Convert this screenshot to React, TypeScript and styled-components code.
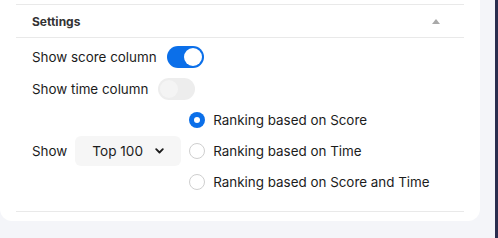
import React, { useState } from "react";
import styled, { createGlobalStyle } from "styled-components";

const Global = createGlobalStyle`
  html, body { margin: 0; padding: 0; background: #f4f5f9; }
  body { font-family: Inter, "Noto Sans", sans-serif; color: #1c1c1c; }
  * { box-sizing: border-box; }
`;

const Page = styled.div`
  display: flex;
  width: 498px;
  height: 238px;
  overflow: hidden;
`;

const Card = styled.div`
  width: 480px;
  height: 221px;
  background: #fff;
  border-radius: 0 0 12px 12px;
  padding: 4px 16px 0;
`;

const Spacer = styled.div`
  flex: 1;
`;

const Strip = styled.div`
  width: 3px;
  background: #2a2d4f;
`;

const Section = styled.div`
  border-top: 1px solid #e9e9e9;
  border-bottom: 1px solid #e9e9e9;
`;

const Header = styled.div`
  height: 33px;
  display: flex;
  align-items: center;
  justify-content: space-between;
  padding: 0 24px 0 16px;
  border-bottom: 1px solid #e9e9e9;
  font-size: 12px;
  font-weight: 700;
  color: #333;
`;

const Caret = styled.span`
  width: 0;
  height: 0;
  border-left: 4px solid transparent;
  border-right: 4px solid transparent;
  border-bottom: 5px solid #a9a9a9;
`;

const Body = styled.div`
  padding: 8px 16px 17px;
  display: flex;
  flex-direction: column;
  gap: 10px;
`;

const Row = styled.div`
  display: flex;
  align-items: center;
  gap: 10px;
  font-size: 13.4px;
  min-height: 22px;
`;

const Toggle = styled.button<{ $on: boolean }>`
  width: 37px;
  height: 22px;
  border: none;
  border-radius: 11px;
  padding: 2px;
  background: ${(p) => (p.$on ? "#0b6fe9" : "#ededed")};
  display: flex;
  justify-content: ${(p) => (p.$on ? "flex-end" : "flex-start")};
  cursor: pointer;
  &::after {
    content: "";
    width: 18px;
    height: 18px;
    border-radius: 50%;
    background: ${(p) => (p.$on ? "#fff" : "#f4f4f4")};
  }
`;

const ShowRow = styled.div`
  display: flex;
  align-items: center;
  font-size: 13.4px;
  margin-top: -2px;
`;

const ShowLabel = styled.span`
  margin-right: 8px;
`;

const Select = styled.div`
  width: 106px;
  height: 30px;
  border-radius: 6px;
  background: #f6f6f6;
  display: flex;
  align-items: center;
  padding-left: 17px;
  gap: 12px;
  font-size: 13.6px;
  margin-right: 8px;
`;

const Radios = styled.div`
  display: flex;
  flex-direction: column;
  gap: 7px;
`;

const RadioRow = styled.label`
  display: flex;
  align-items: center;
  gap: 8px;
  height: 24px;
  font-size: 13.4px;
`;

const RadioDot = styled.span<{ $checked: boolean }>`
  width: 16px;
  height: 16px;
  border-radius: 50%;
  display: flex;
  align-items: center;
  justify-content: center;
  background: ${(p) => (p.$checked ? "#0b6fe9" : "#fff")};
  border: ${(p) => (p.$checked ? "none" : "1.5px solid #cfcfcf")};
  &::after {
    content: "";
    display: ${(p) => (p.$checked ? "block" : "none")};
    width: 6px;
    height: 6px;
    border-radius: 50%;
    background: #fff;
  }
`;

const Chevron = () => (
  <svg width="9" height="6" viewBox="0 0 9 6" fill="none">
    <path d="M1.2 1.2 4.5 4.5 7.8 1.2" stroke="#1c1c1c" strokeWidth="1.8" strokeLinecap="round" strokeLinejoin="round" />
  </svg>
);

const options = ["Ranking based on Score", "Ranking based on Time", "Ranking based on Score and Time"];

export default function App() {
  const [score, setScore] = useState(true);
  const [time, setTime] = useState(false);
  const [sel, setSel] = useState(0);
  return (
    <>
      <Global />
      <Page>
        <Card>
          <Section>
            <Header>
              <span>Settings</span>
              <Caret />
            </Header>
            <Body>
              <Row>
                <span>Show score column</span>
                <Toggle $on={score} onClick={() => setScore(!score)} />
              </Row>
              <Row>
                <span>Show time column</span>
                <Toggle $on={time} onClick={() => setTime(!time)} />
              </Row>
              <ShowRow>
                <ShowLabel>Show</ShowLabel>
                <Select>
                  <span>Top 100</span>
                  <Chevron />
                </Select>
                <Radios>
                  {options.map((o, i) => (
                    <RadioRow key={o} onClick={() => setSel(i)}>
                      <RadioDot $checked={sel === i} />
                      <span>{o}</span>
                    </RadioRow>
                  ))}
                </Radios>
              </ShowRow>
            </Body>
          </Section>
        </Card>
        <Spacer />
        <Strip />
      </Page>
    </>
  );
}
